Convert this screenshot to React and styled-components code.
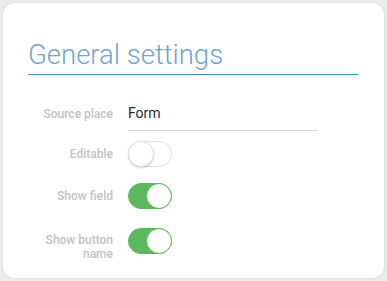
import React from "react";
import styled, { createGlobalStyle } from "styled-components";

const Global = createGlobalStyle`
  html, body { margin: 0; padding: 0; background: #ebebeb; }
  body { font-family: Roboto, "Liberation Sans", sans-serif; }
  * { box-sizing: border-box; }
`;

const Page = styled.div`
  width: 387px;
  height: 281px;
  padding: 3px;
`;

const Card = styled.div`
  width: 381px;
  height: 275px;
  background: #ffffff;
  border-radius: 12px;
  box-shadow: 0 0 2px rgba(0, 0, 0, 0.12);
  padding: 35px 26px 0 25px;
`;

const Title = styled.h2`
  margin: 0;
  font-family: Roboto, "Liberation Sans", sans-serif;
  font-weight: 300;
  font-size: 27.5px;
  line-height: 34px;
  color: #73a3d4;
  padding-bottom: 2px;
  border-bottom: 1px solid #3690b6;
`;

const Form = styled.div`
  display: flex;
  flex-direction: column;
  margin-top: 21px;
`;

const Row = styled.div`
  display: grid;
  grid-template-columns: 85px auto;
  column-gap: 15px;
  align-items: ${(p) => p.$align || "center"};
  margin-top: ${(p) => p.$space || 0}px;
`;

const Label = styled.div`
  text-align: right;
  font-size: 12px;
  line-height: 14px;
  font-weight: 500;
  color: #c2c2c2;
  padding-top: ${(p) => p.$pt || 0}px;
`;

const Field = styled.div`
  width: 190px;
  padding: 7px 0;
  font-size: 14px;
  line-height: 20px;
  color: #2a2a2a;
  border-bottom: 1px solid #d9d9d9;
`;

const Track = styled.div`
  position: relative;
  width: 44px;
  height: 26px;
  border-radius: 13px;
  background: ${(p) => (p.$on ? "#5cb85c" : "#ffffff")};
  border: 1px solid ${(p) => (p.$on ? "#5cb85c" : "#e2e2e2")};
`;

const Knob = styled.div`
  position: absolute;
  top: -1px;
  left: ${(p) => (p.$on ? "17px" : "-1px")};
  width: 26px;
  height: 26px;
  border-radius: 50%;
  background: #ffffff;
  border: 1px solid ${(p) => (p.$on ? "#5cb85c" : "#e0e0e0")};
  box-shadow: ${(p) => (p.$on ? "none" : "0 1px 2px rgba(0,0,0,0.18)")};
`;

const Toggle = ({ on }) => (
  <Track $on={on}>
    <Knob $on={on} />
  </Track>
);

export default function App() {
  return (
    <>
      <Global />
      <Page>
        <Card>
          <Title>General settings</Title>
          <Form>
            <Row>
              <Label>Source place</Label>
              <Field>Form</Field>
            </Row>
            <Row $space={10}>
              <Label>Editable</Label>
              <Toggle on={false} />
            </Row>
            <Row $space={16}>
              <Label>Show field</Label>
              <Toggle on />
            </Row>
            <Row $space={19} $align="start">
              <Label $pt={5}>Show button name</Label>
              <Toggle on />
            </Row>
          </Form>
        </Card>
      </Page>
    </>
  );
}
